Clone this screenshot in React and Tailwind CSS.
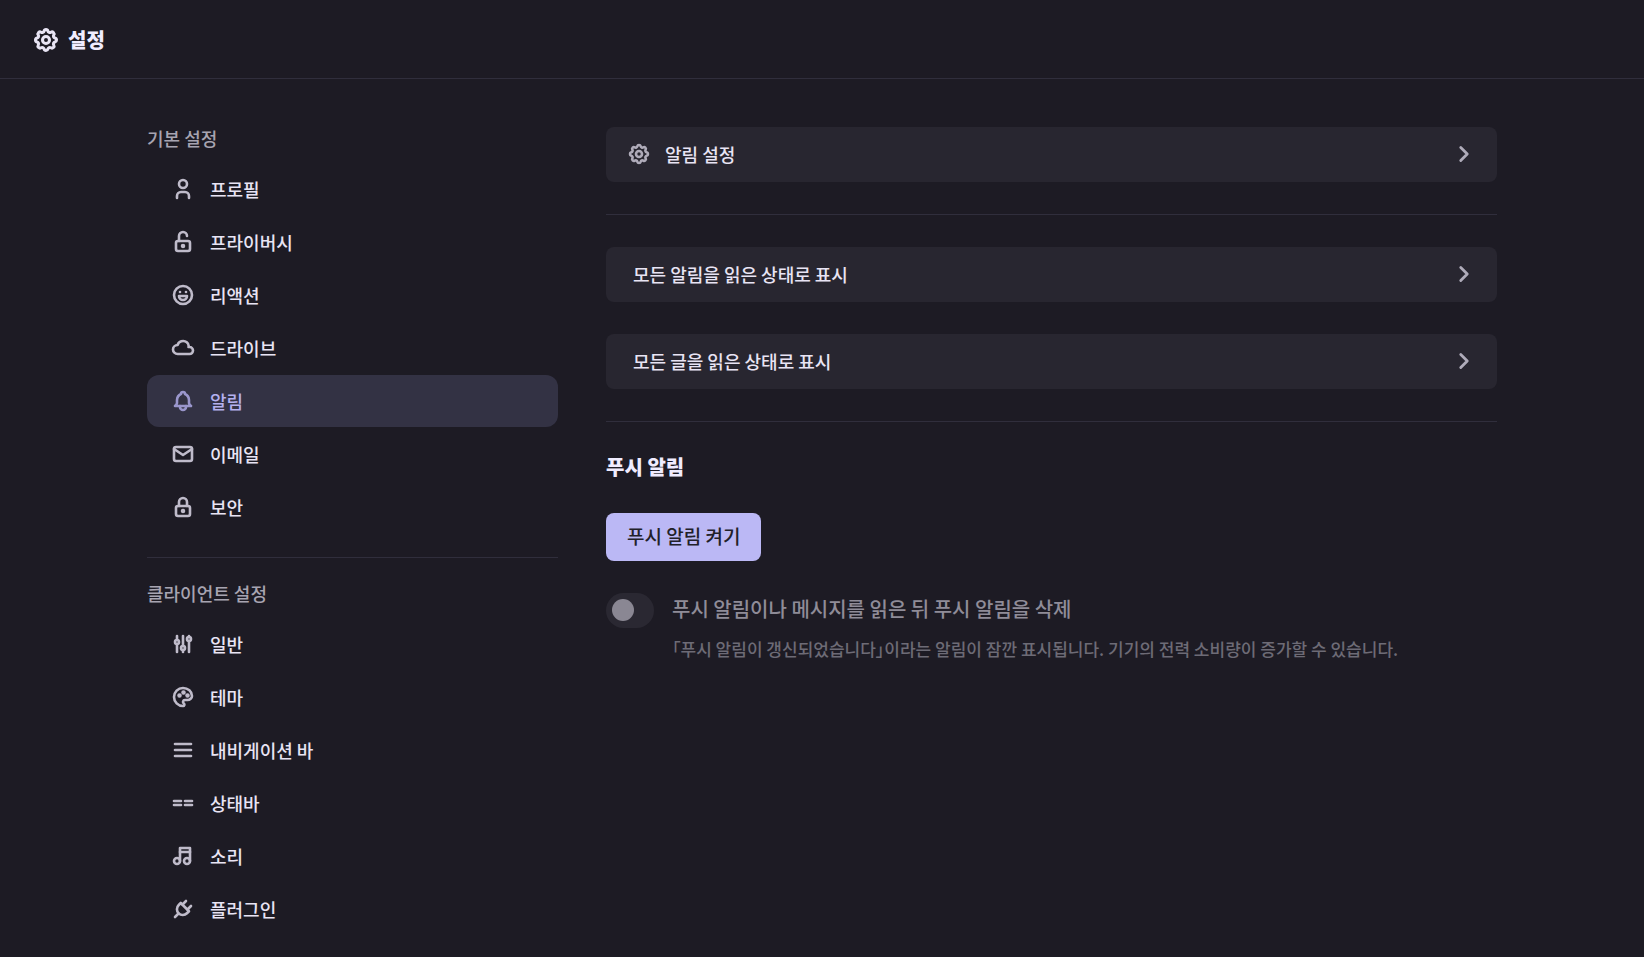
import { useState } from "react";
import {
  TbAdjustments,
  TbBell,
  TbChevronRight,
  TbCloud,
  TbEqualDouble,
  TbLock,
  TbLockOpen,
  TbMail,
  TbMenu2,
  TbMoodHappy,
  TbMusic,
  TbPalette,
  TbPlug,
  TbSettings,
  TbUser,
} from "react-icons/tb";

const sections = [
  {
    title: "기본 설정",
    items: [
      { id: "profile", label: "프로필", icon: TbUser },
      { id: "privacy", label: "프라이버시", icon: TbLockOpen },
      { id: "reaction", label: "리액션", icon: TbMoodHappy },
      { id: "drive", label: "드라이브", icon: TbCloud },
      { id: "notifications", label: "알림", icon: TbBell },
      { id: "email", label: "이메일", icon: TbMail },
      { id: "security", label: "보안", icon: TbLock },
    ],
  },
  {
    title: "클라이언트 설정",
    items: [
      { id: "general", label: "일반", icon: TbAdjustments },
      { id: "theme", label: "테마", icon: TbPalette },
      { id: "navbar", label: "내비게이션 바", icon: TbMenu2 },
      { id: "statusbar", label: "상태바", icon: TbEqualDouble },
      { id: "sounds", label: "소리", icon: TbMusic },
      { id: "plugin", label: "플러그인", icon: TbPlug },
    ],
  },
];

function NavItem({ item, active, onSelect }) {
  const Icon = item.icon;
  return (
    <a
      href={`#${item.id}`}
      onClick={onSelect}
      aria-current={active ? "page" : undefined}
      className={`flex h-[52px] items-center gap-[15px] rounded-xl px-6 text-lg leading-6 ${
        active ? "bg-[#333244] text-[#b4b0ee]" : "text-[#e8e4f4] hover:bg-white/5"
      }`}
    >
      <Icon size={24} strokeWidth={2.6} className="opacity-80" />
      {item.label}
    </a>
  );
}

function Divider() {
  return <hr className="my-8 border-t border-[#302e3c]" />;
}

export default function App() {
  const [current, setCurrent] = useState("notifications");
  const [pushOn, setPushOn] = useState(false);

  return (
    <div className="min-h-screen bg-[#1d1b24] font-['Noto_Sans_CJK_KR','Noto_Sans',sans-serif] font-medium text-[#e8e4f4]">
      <header className="flex h-[79px] items-center gap-2 border-b border-[#302e3c] px-8 pt-0.5">
        <TbSettings size={28} strokeWidth={2.6} />
        <h1 className="text-xl font-black text-[#f0ecff]">설정</h1>
      </header>

      <div className="mx-auto flex max-w-[1350px] gap-12 pt-12 pb-6">
        <nav className="w-[411px] shrink-0">
          {sections.map((section, i) => (
            <section
              key={section.title}
              className={i > 0 ? "mt-6 border-t border-[#302e3c] pt-6" : ""}
            >
              <h2 className="mb-3.5 text-lg leading-[22px] text-[#a7a4b1]">{section.title}</h2>
              <div className="flex flex-col gap-px">
                {section.items.map((item) => (
                  <NavItem
                    key={item.id}
                    item={item}
                    active={item.id === current}
                    onSelect={() => setCurrent(item.id)}
                  />
                ))}
              </div>
            </section>
          ))}
        </nav>

        <main className="min-w-0 flex-1">
          <a
            href="#notification-settings"
            className="flex h-[55px] items-center rounded-lg bg-[#282630] pr-5 pb-0.5 pl-[21px] text-lg leading-6"
          >
            <TbSettings size={24} strokeWidth={2.6} className="mr-3.5 opacity-70" />
            알림 설정
            <TbChevronRight size={26} strokeWidth={2.6} className="ml-auto opacity-70" />
          </a>

          <Divider />

          <div className="flex flex-col gap-8">
            {["모든 알림을 읽은 상태로 표시", "모든 글을 읽은 상태로 표시"].map((label) => (
              <button
                key={label}
                type="button"
                className="flex h-[55px] items-center rounded-lg bg-[#282630] pr-5 pb-0.5 pl-[27px] text-lg leading-6"
              >
                {label}
                <TbChevronRight size={26} strokeWidth={2.6} className="ml-auto opacity-70" />
              </button>
            ))}
          </div>

          <Divider />

          <h2 className="mb-[33px] text-xl leading-[26px] font-black text-[#f0ecff]">푸시 알림</h2>
          <button
            type="button"
            onClick={() => setPushOn(!pushOn)}
            className="h-12 rounded-lg bg-[#bbb8f5] px-[21px] pb-0.5 text-[19px] leading-6 text-[#222129]"
          >
            푸시 알림 켜기
          </button>

          <div className="mt-8 flex items-start gap-[18px]">
            <input
              id="push-cleanup"
              type="checkbox"
              disabled={!pushOn}
              aria-describedby="push-cleanup-caption"
              className="h-[35px] w-12 shrink-0 appearance-none rounded-full bg-[#2a2832] p-1.5 before:block before:size-[22px] before:rounded-full before:bg-[#8a8793] checked:before:translate-x-3.5"
            />
            <div className="pt-0.5">
              <label htmlFor="push-cleanup" className="block text-xl leading-7 text-[#8f8c98]">
                푸시 알림이나 메시지를 읽은 뒤 푸시 알림을 삭제
              </label>
              <p
                id="push-cleanup-caption"
                className="mt-3.5 text-[17px] leading-6 text-[#6d6b76] [font-feature-settings:'palt']"
              >
                「푸시 알림이 갱신되었습니다」이라는 알림이 잠깐 표시됩니다. 기기의 전력 소비량이 증가할 수 있습니다.
              </p>
            </div>
          </div>
        </main>
      </div>
    </div>
  );
}
